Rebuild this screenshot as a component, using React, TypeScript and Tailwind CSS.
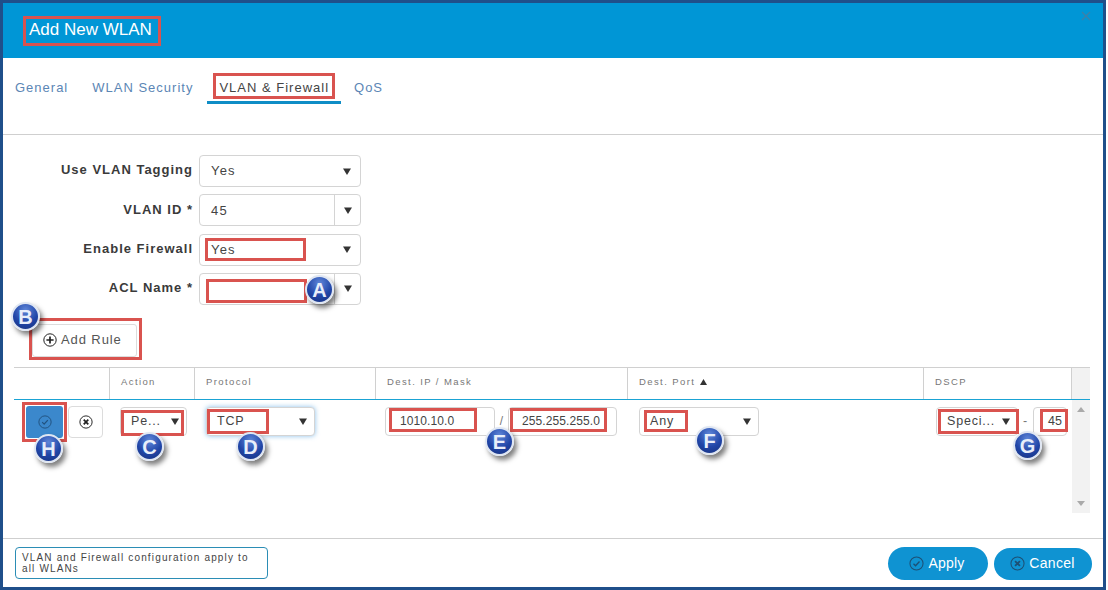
import type { ReactNode } from 'react';

const FONT = "font-['Liberation_Sans',Arial,sans-serif]";

function Caret() {
  return (
    <svg width="8" height="7" viewBox="0 0 8 7" className="shrink-0">
      <path d="M0 0.5h8L4 7z" fill="#333" />
    </svg>
  );
}

function CheckCircle({ color = '#333', size = 16 }: { color?: string; size?: number }) {
  return (
    <svg width={size} height={size} viewBox="0 0 16 16" fill="none" stroke={color} className="shrink-0">
      <circle cx="8" cy="8" r="7" strokeWidth="1.1" />
      <path d="M4.8 8.2l2.2 2.2 4.2-4.6" strokeWidth="1.4" />
    </svg>
  );
}

function CrossCircle({ color = '#222', size = 16 }: { color?: string; size?: number }) {
  return (
    <svg width={size} height={size} viewBox="0 0 16 16" fill="none" stroke={color} className="shrink-0">
      <circle cx="8" cy="8" r="7" strokeWidth="1.1" />
      <path d="M5.4 5.4l5.2 5.2M10.6 5.4l-5.2 5.2" strokeWidth="2" />
    </svg>
  );
}

function PlusCircle() {
  return (
    <svg width="14" height="14" viewBox="0 0 14 14" fill="none" stroke="#222" className="shrink-0">
      <circle cx="7" cy="7" r="6.2" strokeWidth="1" />
      <path d="M7 3.4v7.2M3.4 7h7.2" strokeWidth="1.7" />
    </svg>
  );
}

function FormRow({ label, children }: { label: string; children: ReactNode }) {
  return (
    <div className="flex h-[32px] items-center">
      <div className="w-[190px] pb-[2px] text-right text-[13px] font-bold tracking-[1px] text-[#3a3a3a]">{label}</div>
      <div className="ml-[6px]">{children}</div>
    </div>
  );
}

function Select({ value, split }: { value: string; split?: boolean }) {
  return (
    <div className="flex h-[32px] w-[162px] items-center rounded-[4px] border border-[#d4d4d4] bg-white text-[13px] tracking-[1.2px] text-[#444]">
      <span className="flex-1 pl-[11px]">{value}</span>
      <span className={split ? 'flex h-full w-[26px] items-center justify-center border-l border-[#d4d4d4]' : 'flex w-[26px] items-center justify-center'}>
        <Caret />
      </span>
    </div>
  );
}

function CellSelect({ value, className }: { value: string; className: string }) {
  return (
    <div className={`flex h-[29px] items-center justify-between rounded-[4px] border border-[#d4d4d4] bg-white pl-[10px] pr-[7px] text-[12.5px] tracking-[0.8px] text-[#444] ${className}`}>
      <span>{value}</span>
      <Caret />
    </div>
  );
}

function Mark({ className }: { className: string }) {
  return <div className={`pointer-events-none absolute border-[3px] border-[#d9534f] ${className}`} />;
}

function Badge({ letter, className }: { letter: string; className: string }) {
  return (
    <div className={`absolute flex h-[29px] w-[29px] items-center justify-center rounded-full border-2 border-[#dfe6f2] bg-[radial-gradient(circle_at_50%_25%,#5f86d8,#2146a8_55%,#16307e)] text-[20px] font-bold text-[#e8eefa] shadow-[3px_4px_5px_rgba(0,0,0,0.5)] ${className}`}>
      {letter}
    </div>
  );
}

const HEAD = 'flex h-full items-center border-r border-[#d0d0d0] pb-[3px] pl-[11px] text-[9.5px] tracking-[1.4px] text-[#777]';

export default function App() {
  return (
    <div className={`relative h-[590px] w-[1108px] bg-white ${FONT}`}>
      <div className="flex h-[590px] w-[1106px] flex-col border-[3px] border-[#1f4f8a] bg-white">
        {/* header */}
        <div className="relative flex h-[55px] shrink-0 items-center bg-[#0096d6] pb-[2px] pl-[26px] text-[17px] text-white">
          Add New WLAN
          <svg width="10" height="10" viewBox="0 0 10 10" stroke="#3f7fa6" strokeWidth="1.2" className="absolute right-[12px] top-[8px]">
            <path d="M1 1l8 8M9 1l-8 8" />
          </svg>
        </div>

        {/* tabs */}
        <div className="h-[77px] shrink-0 border-b border-[#cfcfcf]">
          <div className="flex h-[46px] items-end pl-[3px] text-[13px] tracking-[1px] text-[#5b86b5]">
            <div className="flex h-[30px] items-start px-[9px] pt-[4px]">General</div>
            <div className="ml-[6px] flex h-[30px] items-start px-[9px] pt-[4px]">WLAN Security</div>
            <div className="ml-[5px] flex h-[30px] items-start border-b-[3px] border-[#0f8dc6] px-[12px] pt-[4px] text-[#444]">VLAN &amp; Firewall</div>
            <div className="ml-[4px] flex h-[30px] items-start px-[9px] pt-[4px]">QoS</div>
          </div>
        </div>

        {/* form */}
        <div className="flex shrink-0 flex-col gap-[7.3px] pt-[20px]">
          <FormRow label="Use VLAN Tagging"><Select value="Yes" /></FormRow>
          <FormRow label="VLAN ID *"><Select value="45" split /></FormRow>
          <FormRow label="Enable Firewall"><Select value="Yes" /></FormRow>
          <FormRow label="ACL Name *"><Select value="" split /></FormRow>
        </div>

        <div className="ml-[29px] mt-[19.1px] flex h-[33px] w-[105px] shrink-0 items-center gap-[4px] rounded-[3px] border border-[#dcdcdc] pb-[1px] pl-[10px] text-[13px] tracking-[0.9px] text-[#555]">
          <PlusCircle />
          Add Rule
        </div>

        {/* table */}
        <div className="ml-[11px] mt-[10px] w-[1076px] shrink-0">
          <div className="grid h-[32px] grid-cols-[96px_85px_181px_252px_296px_148px_18px] border-t border-[#d0d0d0]">
            <div className={HEAD} />
            <div className={HEAD}>Action</div>
            <div className={HEAD}>Protocol</div>
            <div className={HEAD}>Dest. IP / Mask</div>
            <div className={HEAD}>
              Dest. Port
              <svg width="7" height="6" viewBox="0 0 7 6" className="ml-[5px]"><path d="M3.5 0L7 6H0z" fill="#333" /></svg>
            </div>
            <div className={HEAD}>DSCP</div>
            <div className="bg-[#f2f2f2]" />
          </div>
          <div className="h-[1px] bg-[#1aa3d4]" />
          <div className="grid h-[113px] grid-cols-[96px_85px_181px_252px_296px_148px_18px]">
            <div className="flex items-start gap-[5px] pl-[12px] pt-[6px]">
              <div className="flex h-[32px] w-[37px] items-center justify-center rounded-[3px] bg-[#3b88cc]">
                <CheckCircle color="#21527f" size={14} />
              </div>
              <div className="flex h-[32px] w-[35px] items-center justify-center rounded-[4px] border border-[#dcdcdc]">
                <CrossCircle size={14} />
              </div>
            </div>
            <div className="pl-[10px] pt-[7px]"><CellSelect value="Pe..." className="w-[67px]" /></div>
            <div className="pl-[11px] pt-[7px]">
              <CellSelect value="TCP" className="w-[109px] border-[#9cc7e6] shadow-[0_0_5px_rgba(60,150,220,0.6)]" />
            </div>
            <div className="flex items-start pl-[9px] pt-[7px] text-[12px] tracking-[0.1px] text-[#444]">
              <div className="flex h-[29px] w-[110px] items-center rounded-[4px] border border-[#d4d4d4] pl-[14px]">1010.10.0</div>
              <span className="flex h-[29px] w-[13px] items-center justify-center text-[#777]">/</span>
              <div className="flex h-[29px] w-[109px] items-center rounded-[4px] border border-[#d4d4d4] pl-[13px]">255.255.255.0</div>
            </div>
            <div className="pl-[11px] pt-[7px]"><CellSelect value="Any" className="w-[120px]" /></div>
            <div className="flex items-start pl-[12px] pt-[7px] text-[12.5px] tracking-[0.8px] text-[#444]">
              <CellSelect value="Speci..." className="w-[82px]" />
              <span className="flex h-[29px] w-[15px] items-center justify-center text-[#777]">-</span>
              <div className="flex h-[29px] w-[34px] items-center justify-end rounded-[4px] border border-[#d4d4d4] pr-[4px] tracking-normal">45</div>
            </div>
            <div className="flex flex-col items-center justify-between bg-[#f2f2f2] py-[7px]">
              <svg width="8" height="5" viewBox="0 0 8 5"><path d="M4 0l4 5H0z" fill="#aaa" /></svg>
              <svg width="8" height="5" viewBox="0 0 8 5"><path d="M0 0h8L4 5z" fill="#aaa" /></svg>
            </div>
          </div>
        </div>

        {/* footer */}
        <div className="mt-[25px] flex flex-1 items-start justify-between border-t border-[#cfcfcf] pl-[12px] pr-[11px] pt-[8px]">
          <div className="h-[32px] w-[253px] rounded-[4px] border border-[#2b8db5] pl-[6px] pr-[14px] pt-[4px] text-[10px] leading-[11px] tracking-[1.15px] text-[#444]">
            VLAN and Firewall configuration apply to all WLANs
          </div>
          <div className="flex gap-[6px]">
            <div className="flex h-[33px] w-[100px] items-center justify-center gap-[4px] rounded-full bg-[#0f93d2] pr-[2px] text-[14px] tracking-[0.2px] text-white">
              <CheckCircle color="#1d4f74" size={15} />
              Apply
            </div>
            <div className="mt-[1px] flex h-[32px] w-[98px] items-center justify-center gap-[4px] rounded-full bg-[#0f93d2] pr-[1px] text-[14px] tracking-[0.3px] text-white">
              <CrossCircle color="#1d4f74" size={15} />
              Cancel
            </div>
          </div>
        </div>
      </div>

      {/* annotations drawn over the screenshot */}
      <Mark className="left-[23px] top-[16px] h-[30px] w-[138px]" />
      <Mark className="left-[213px] top-[73px] h-[26px] w-[122px]" />
      <Mark className="left-[205px] top-[238px] h-[23px] w-[101px]" />
      <Mark className="left-[206px] top-[279px] h-[24px] w-[101px]" />
      <Mark className="left-[29px] top-[318px] h-[42px] w-[113px]" />
      <Mark className="left-[22px] top-[402px] h-[40px] w-[45px]" />
      <Mark className="left-[121px] top-[410px] h-[26px] w-[63px]" />
      <Mark className="left-[207px] top-[409px] h-[25px] w-[62px]" />
      <Mark className="left-[389px] top-[408px] h-[24px] w-[88px]" />
      <Mark className="left-[510px] top-[408px] h-[24px] w-[97px]" />
      <Mark className="left-[644px] top-[410px] h-[22px] w-[44px]" />
      <Mark className="left-[938px] top-[409px] h-[25px] w-[81px]" />
      <Mark className="left-[1040px] top-[409px] h-[23px] w-[28px]" />

      <Badge letter="A" className="left-[305px] top-[275px]" />
      <Badge letter="B" className="left-[11px] top-[302px]" />
      <Badge letter="H" className="left-[34px] top-[434px]" />
      <Badge letter="C" className="left-[135px] top-[432px]" />
      <Badge letter="D" className="left-[236px] top-[432px]" />
      <Badge letter="E" className="left-[485px] top-[427px]" />
      <Badge letter="F" className="left-[695px] top-[426px]" />
      <Badge letter="G" className="left-[1013px] top-[431px]" />
    </div>
  );
}
